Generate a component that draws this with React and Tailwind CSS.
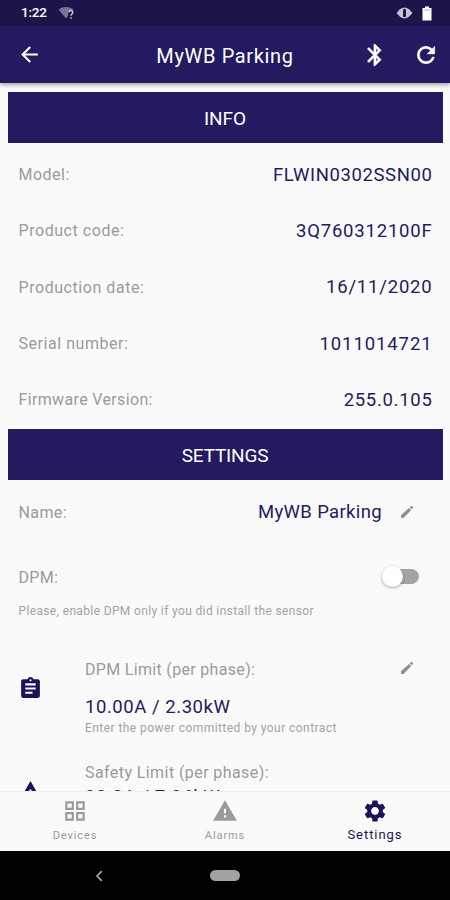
import React from "react";
import {
  MdArrowBack,
  MdAssignment,
  MdOutlineGridView,
  MdSettings,
  MdWarning,
} from "react-icons/md";

const info = [
  { label: "Model:", value: "FLWIN0302SSN00", labelClass: "tracking-[0.5px]", valueClass: "tracking-[0.6px]" },
  { label: "Product code:", value: "3Q760312100F", labelClass: "tracking-[0.55px]", valueClass: "tracking-[0.8px]" },
  { label: "Production date:", value: "16/11/2020", labelClass: "tracking-[0.55px]", valueClass: "tracking-[0.8px]" },
  { label: "Serial number:", value: "1011014721", labelClass: "tracking-[0.55px]", valueClass: "tracking-[0.9px]" },
  { label: "Firmware Version:", value: "255.0.105", labelClass: "tracking-[0.35px]", valueClass: "tracking-[0.7px]" },
];

function StatusBar() {
  return (
    <div className="flex h-[26px] shrink-0 items-center bg-[#1b1549] pl-[21px] pr-[18px] text-white">
      <span className="text-[13.5px] font-medium leading-none tracking-[-0.2px]">1:22</span>
      <svg className="ml-[11px] h-[14px] w-[17px]" viewBox="0 0 17 14">
        <path d="M0.5 3.5C5 0.2 11 0.2 15.5 3.5L14 5.2C11.5 4 9.6 6 10.2 9.6L8 12.5Z" fill="#777399" />
        <path d="M11 6.3C11 3.9 14.8 4 14.7 6.4C14.7 8 13 8 13 9.8M13 11.2V12.7" fill="none" stroke="#c8c6da" strokeWidth="1.5" />
      </svg>
      <svg className="ml-auto h-[12px] w-[17px]" viewBox="0 0 17 12">
        <path d="M0.5 6L4 2.2Q8.5 -1 13 2.2L16.5 6L13 9.8Q8.5 13 4 9.8Z" fill="#c3c1d2" />
        <rect x="7" y="1.800" width="3" height="8.400" rx="1.500" fill="#1b1549" />
      </svg>
      <svg className="ml-[9px] h-[15px] w-[10px]" viewBox="0 0 10 15">
        <path d="M3 0.5H7V2H9.5V14.5H0.5V2H3Z" fill="#fff" />
        <path d="M2 4H8" stroke="#aaa6bd" />
      </svg>
    </div>
  );
}

function BluetoothIcon() {
  return (
    <svg className="size-[26px] shrink-0" viewBox="0 0 24 24" fill="currentColor" stroke="currentColor" strokeWidth="0.5">
      <path d="M17.71 7.71 12 2h-1v7.59L6.41 5 5 6.41 10.59 12 5 17.59 6.41 19 11 14.41V22h1l5.71-5.71-4.3-4.29 4.3-4.29zM13 5.83l1.88 1.88L13 9.59V5.83zm1.88 10.46L13 18.17v-3.76l1.88 1.88z" />
    </svg>
  );
}

function RefreshIcon() {
  return (
    <svg className="size-[26px] shrink-0" viewBox="0 0 24 24" fill="currentColor" stroke="currentColor" strokeWidth="0.5">
      <path d="M17.65 6.35A7.958 7.958 0 0 0 12 4c-4.42 0-7.99 3.58-7.99 8s3.57 8 7.99 8c3.73 0 6.84-2.55 7.73-6h-2.08A5.99 5.99 0 0 1 12 18c-3.31 0-6-2.69-6-6s2.69-6 6-6c1.66 0 3.14.69 4.22 1.78L13 11h7V4l-2.35 2.35z" />
    </svg>
  );
}

function Header() {
  return (
    <header className="z-10 grid h-[57px] shrink-0 grid-cols-[90px_1fr_90px] items-center bg-[#231a60] text-white shadow-[0_2px_4px_rgba(0,0,0,0.35)]">
      <MdArrowBack className="ml-[17px] size-[25px]" />
      <h1 className="pt-[2px] text-center text-[20px] tracking-[0.65px]">MyWB Parking</h1>
      <div className="flex items-center gap-[25px] pl-[2px]">
        <BluetoothIcon />
        <RefreshIcon />
      </div>
    </header>
  );
}

function SectionTitle({ children, textClass }) {
  return (
    <h2 className={`ml-[8px] mr-[7px] flex h-[51px] shrink-0 items-center justify-center bg-[#231a60] pr-[1px] pt-[3px] text-[19px] text-white ${textClass}`}>
      {children}
    </h2>
  );
}

function Pencil({ className }) {
  return (
    <svg className={`h-[14px] w-[14px] shrink-0 ${className}`} viewBox="0 0 14 14" fill="#8f8f8f">
      <path d="M1 13V10.3L9 2.9L11.2 5.1L3.6 13Z" />
      <path d="M9.7 2.2L10.9 1.1Q11.6 0.6 12.2 1.2L12.9 1.9Q13.4 2.5 12.9 3.1L11.9 4.3Z" />
    </svg>
  );
}

function Tab({ icon: Icon, label, active }) {
  return (
    <div className={`flex flex-1 flex-col items-center pt-[6px] ${active ? "text-[#1c1259]" : "text-[#9b9b9b]"}`}>
      <Icon className="size-[26px]" />
      <span
        className={
          active
            ? "mt-[2px] text-[13px] leading-[18px] tracking-[0.95px]"
            : "mt-[3px] text-[11px] leading-[18px] tracking-[0.9px]"
        }
      >
        {label}
      </span>
    </div>
  );
}

export default function App() {
  return (
    <div className="flex h-[900px] w-[450px] flex-col overflow-hidden bg-[#fafafa] font-['Roboto',sans-serif] text-[#9b9b9b]">
      <StatusBar />
      <Header />
      <main className="flex min-h-0 flex-1 flex-col overflow-hidden pt-[9px]">
        <SectionTitle textClass="tracking-[-0.1px]">INFO</SectionTitle>
        <dl className="mt-[4px] shrink-0">
          {info.map((row) => (
            <div key={row.label} className="flex h-[56.25px] items-center justify-between pl-[18.5px] pr-[17.5px]">
              <dt className={`text-[16px] ${row.labelClass}`}>{row.label}</dt>
              <dd className={`pt-[1px] text-[18.5px] text-[#231a60] ${row.valueClass}`}>{row.value}</dd>
            </div>
          ))}
        </dl>
        <div className="h-[0.75px] shrink-0" />
        <SectionTitle textClass="tracking-[-0.2px]">SETTINGS</SectionTitle>

        <div className="mt-[4px] flex h-[57px] shrink-0 items-center pl-[18.5px] pr-[36px]">
          <span className="text-[16px] tracking-[0.4px]">Name:</span>
          <span className="ml-auto pt-[1px] text-[18.5px] tracking-[0.35px] text-[#231a60]">MyWB Parking</span>
          <Pencil className="-mt-[1px] ml-[18px]" />
        </div>

        <div className="mt-[16px] flex h-[40px] shrink-0 items-center justify-between pl-[18.5px] pr-[31px]">
          <span className="pt-[1px] text-[16px] tracking-[0.3px]">DPM:</span>
          <span className="-mt-[1px] flex h-[15px] w-[37px] items-center rounded-full bg-linear-to-r from-transparent from-30% to-[#a3a3a3] to-30%">
            <span className="size-[21px] rounded-full bg-white shadow-[0_1px_3px_rgba(0,0,0,0.35)]" />
          </span>
        </div>
        <p className="mt-[5px] shrink-0 pl-[18.5px] text-[12px] leading-[18px] tracking-[0.36px] text-[#a3a3a3]">
          Please, enable DPM only if you did install the sensor
        </p>

        <div className="mt-[38px] flex h-[85px] shrink-0 items-start pl-[18px] pr-[36px]">
          <MdAssignment className="mt-[18px] size-[25px] text-[#1c1259]" />
          <div className="ml-[42px] flex-1">
            <div className="h-[24px] text-[16px] leading-[24px] tracking-[0.32px]">DPM Limit (per phase):</div>
            <div className="mt-[13px] h-[24px] text-[18.5px] leading-[24px] tracking-[0.55px] text-[#231a60]">10.00A / 2.30kW</div>
            <div className="h-[18px] text-[12px] leading-[18px] tracking-[0.44px] text-[#a3a3a3]">Enter the power committed by your contract</div>
          </div>
          <Pencil className="mt-[3px]" />
        </div>

        <div className="mt-[18px] flex h-[85px] shrink-0 items-start pl-[18px] pr-[36px]">
          <MdWarning className="mt-[18px] size-[25px] text-[#1c1259]" />
          <div className="ml-[42px] flex-1">
            <div className="h-[24px] text-[16px] leading-[24px] tracking-[0.42px]">Safety Limit (per phase):</div>
            <div className="h-[24px] text-[18.5px] leading-[24px] tracking-[0.6px] text-[#231a60]">32.0A / 7.36kW</div>
          </div>
        </div>
      </main>

      <nav className="z-10 flex h-[60px] shrink-0 border-t border-[#f1f1f1] bg-[#fafafa]">
        <Tab icon={MdOutlineGridView} label="Devices" />
        <Tab icon={MdWarning} label="Alarms" />
        <Tab icon={MdSettings} label="Settings" active />
      </nav>

      <div className="grid h-[49px] shrink-0 grid-cols-[1fr_30px_1fr] items-center bg-black">
        <svg className="ml-[95px] h-[12px] w-[8px]" viewBox="0 0 8 12" fill="none" stroke="#a8a8a8" strokeWidth="1.7">
          <path d="M6.8 1.2L2 6L6.8 10.8" />
        </svg>
        <span className="h-[11px] rounded-full bg-[#a3a3a3]" />
      </div>
    </div>
  );
}
